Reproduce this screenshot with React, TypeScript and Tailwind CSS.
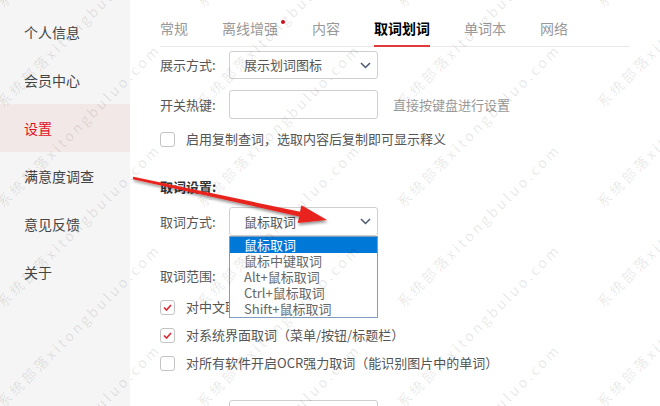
import React from 'react';

const menu = ['个人信息', '会员中心', '设置', '满意度调查', '意见反馈', '关于'];
const tabs = ['常规', '离线增强', '内容', '取词划词', '单词本', '网络'];
const modes = ['鼠标取词', '鼠标中键取词', 'Alt+鼠标取词', 'Ctrl+鼠标取词', 'Shift+鼠标取词'];

const Chevron = () => (
  <svg width="11" height="7" viewBox="0 0 11 7" className="shrink-0">
    <polyline points="1,1 5.5,5.5 10,1" fill="none" stroke="#4b5874" strokeWidth="1.5" />
  </svg>
);

const Checkbox = ({ checked }: { checked?: boolean }) => (
  <span className="w-[15px] h-[15px] shrink-0 rounded-[3px] border border-[#c4c4c4] bg-white flex items-center justify-center">
    {checked && (
      <svg width="9" height="7" viewBox="0 0 9 7">
        <polyline points="1,3.5 3.5,6 8,1" fill="none" stroke="#e0242b" strokeWidth="1.6" />
      </svg>
    )}
  </span>
);

const CheckRow = ({ label, checked, className }: { label: string; checked?: boolean; className?: string }) => (
  <div className={`flex items-center h-[16px] ${className ?? ''}`}>
    <Checkbox checked={checked} />
    <span className="ml-[11px] text-[13px] text-[#555] whitespace-nowrap">{label}</span>
  </div>
);

export default function App() {
  const marks: { x: number; y: number }[] = [];
  for (const x of [5, 205, 405, 605]) {
    for (const y of [10, 110, 210, 310, 410, 510]) marks.push({ x, y });
  }

  return (
    <div className="relative w-[660px] h-[406px] overflow-hidden bg-white flex font-['Noto_Sans_CJK_SC',sans-serif]">
      {/* sidebar */}
      <aside className="w-[130px] shrink-0 bg-[#f5f5f5] pt-[8px]">
        {menu.map((m) => (
          <div
            key={m}
            className={
              m === '设置'
                ? 'h-[48px] flex items-center pl-[24px] text-[14px] bg-[#f3e8e8] text-[#e0101e]'
                : 'h-[48px] flex items-center pl-[24px] text-[14px] text-[#444]'
            }
          >
            {m}
          </div>
        ))}
      </aside>

      <main className="flex-1 px-[30px] flex flex-col">
        {/* tabs */}
        <div className="h-[47px] shrink-0 flex gap-[34px] border-b border-[#e8e8e8]">
          {tabs.map((t) => (
            <div key={t} className="relative flex items-end pb-[8px]">
              <span
                className={
                  t === '取词划词'
                    ? 'text-[14px] leading-[20px] font-bold text-black'
                    : 'text-[14px] leading-[20px] text-[#999]'
                }
              >
                {t}
              </span>
              {t === '离线增强' && (
                <span className="absolute right-[-7px] top-[20px] w-[4px] h-[4px] rounded-full bg-[#d0101b]" />
              )}
              {t === '取词划词' && <span className="absolute left-0 right-0 -bottom-px h-[2px] bg-[#e03a3a]" />}
            </div>
          ))}
        </div>

        {/* 展示方式 */}
        <div className="mt-[4px] flex items-center h-[28px]">
          <span className="w-[69px] text-[13px] text-[#555]">展示方式:</span>
          <div className="w-[149px] h-[28px] border border-[#cfcfcf] rounded-[3px] flex items-center justify-between pl-[14px] pr-[6px] text-[13px] text-[#555]">
            <span>展示划词图标</span>
            <Chevron />
          </div>
        </div>

        {/* 开关热键 */}
        <div className="mt-[11px] flex items-center h-[29px]">
          <span className="w-[69px] text-[13px] text-[#555]">开关热键:</span>
          <div className="w-[149px] h-[29px] border border-[#cfcfcf] rounded-[3px]" />
          <span className="ml-[15px] text-[13px] text-[#999]">直接按键盘进行设置</span>
        </div>

        <CheckRow className="mt-[12px]" label="启用复制查词，选取内容后复制即可显示释义" />

        <div className="mt-[30px] leading-[20px] text-[13px] font-bold text-[#333]">取词设置:</div>

        {/* 取词方式 */}
        <div className="mt-[10px] flex items-center h-[29px]">
          <span className="w-[69px] text-[13px] text-[#555]">取词方式:</span>
          <div className="relative w-[149px] h-[29px] border border-[#cfcfcf] rounded-[3px] flex items-center justify-between pl-[14px] pr-[6px] text-[13px] text-[#555]">
            <span>鼠标取词</span>
            <Chevron />
            <div className="absolute z-10 left-[-1px] top-[28px] w-[149px] border border-[#7f9dbf] bg-white">
              {modes.map((m, i) => (
                <div
                  key={m}
                  className={
                    i === 0
                      ? 'h-[16px] leading-[16px] pl-[14px] text-[13px] bg-[#0078d7] text-white'
                      : 'h-[16px] leading-[16px] pl-[14px] text-[13px] text-[#666]'
                  }
                >
                  {m}
                </div>
              ))}
            </div>
          </div>
        </div>

        <div className="mt-[30px] leading-[20px] text-[13px] text-[#555]">取词范围:</div>

        <CheckRow className="mt-[13px]" checked label="对中文取词" />
        <CheckRow className="mt-[12px]" checked label="对系统界面取词（菜单/按钮/标题栏）" />
        <CheckRow className="mt-[12px]" label="对所有软件开启OCR强力取词（能识别图片中的单词）" />

        <div className="mt-[29px] ml-[69px] w-[149px] h-[29px] shrink-0 border border-[#cfcfcf] rounded-[3px]" />
      </main>

      {/* watermark */}
      <div className="absolute inset-0 pointer-events-none z-20">
        {marks.map((p, i) => (
          <span
            key={i}
            className="absolute origin-bottom-left -rotate-45 whitespace-nowrap text-[14px] leading-[16px] tracking-[3px] text-black/[0.1]"
            style={{ left: p.x, top: p.y - 16 }}
          >
            系统部落xitongbuluo.com
          </span>
        ))}
      </div>

      {/* arrow */}
      <svg className="absolute inset-0 pointer-events-none z-30" width="660" height="406">
        <defs>
          <filter id="sh" x="-10%" y="-50%" width="120%" height="200%">
            <feDropShadow dx="1" dy="2" stdDeviation="1.5" floodColor="#000" floodOpacity="0.45" />
          </filter>
        </defs>
        <polygon
          points="133.2,176.8 300,211.8 301.5,205.3 327,220 297.7,222.9 299.2,216.4 132.8,179.2"
          fill="#e8231d"
          filter="url(#sh)"
        />
      </svg>
    </div>
  );
}
